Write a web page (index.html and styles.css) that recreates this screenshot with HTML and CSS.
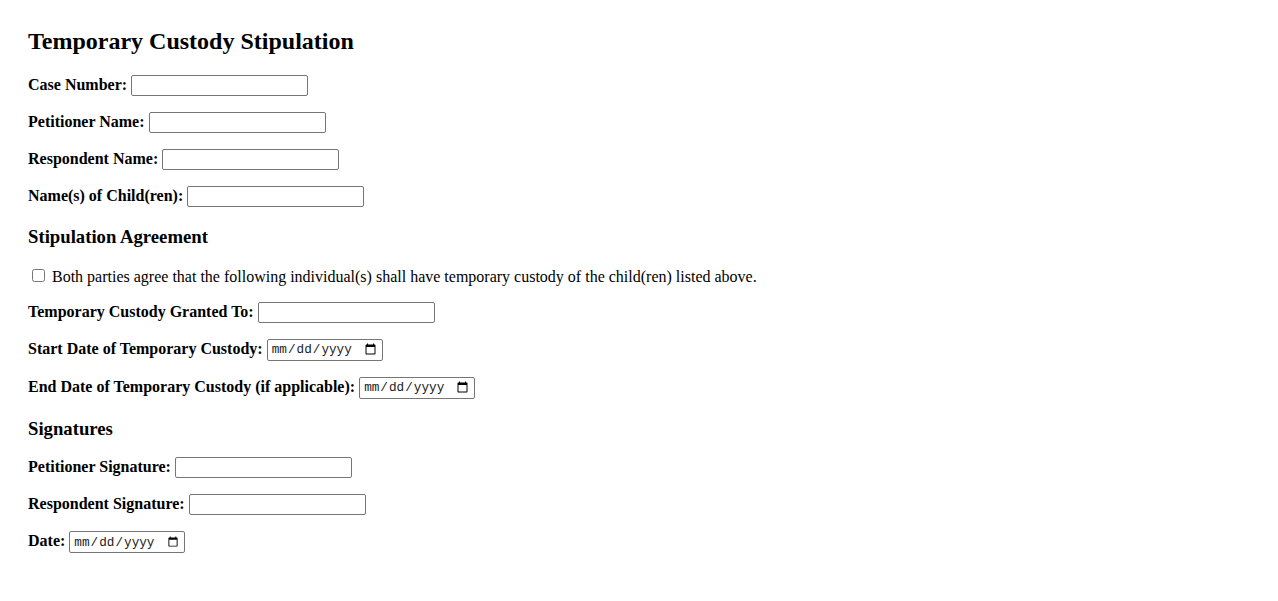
FILE: index.html
```html
<!DOCTYPE html>
<html lang="en">
<head>
<meta charset="utf-8">
<title>Temporary Custody Stipulation</title>
<link rel="stylesheet" href="styles.css">
</head>
<body>
<div class="page">
  <h2 class="title">Temporary Custody Stipulation</h2>
  <form>
    <div class="form-group">
      <label for="case">Case Number:</label>
      <input type="text" id="case" class="text-field">
    </div>
    <div class="form-group">
      <label for="petitioner">Petitioner Name:</label>
      <input type="text" id="petitioner" class="text-field">
    </div>
    <div class="form-group">
      <label for="respondent">Respondent Name:</label>
      <input type="text" id="respondent" class="text-field">
    </div>
    <div class="form-group">
      <label for="children">Name(s) of Child(ren):</label>
      <input type="text" id="children" class="text-field">
    </div>

    <h3 class="section">Stipulation Agreement</h3>
    <div class="form-group">
      <label class="check-label"><input type="checkbox" class="check"> Both parties agree that the following individual(s) shall have temporary custody of the child(ren) listed above.</label>
    </div>
    <div class="form-group">
      <label for="granted">Temporary Custody Granted To:</label>
      <input type="text" id="granted" class="text-field">
    </div>
    <div class="form-group">
      <label for="start">Start Date of Temporary Custody:</label>
      <input type="date" id="start" class="date-field">
    </div>
    <div class="form-group">
      <label for="end">End Date of Temporary Custody (if applicable):</label>
      <input type="date" id="end" class="date-field">
    </div>

    <h3 class="section">Signatures</h3>
    <div class="form-group">
      <label for="psig">Petitioner Signature:</label>
      <input type="text" id="psig" class="text-field">
    </div>
    <div class="form-group">
      <label for="rsig">Respondent Signature:</label>
      <input type="text" id="rsig" class="text-field">
    </div>
    <div class="form-group">
      <label for="date">Date:</label>
      <input type="date" id="date" class="date-field">
    </div>
  </form>
</div>
</body>
</html>
```

FILE: styles.css
```css
html, body {
  margin: 0;
  padding: 0;
  background: #ffffff;
}

body {
  font-family: "Liberation Serif", "Times New Roman", serif;
  font-size: 16px;
  color: #000000;
}

.page {
  padding: 28px 28px 20px 28px;
}

.title {
  font-size: 24px;
  font-weight: bold;
  margin: 0 0 20px 0;
}

.section {
  font-size: 18.72px;
  font-weight: bold;
  margin: 19px 0 17.5px 0;
}

.form-group {
  margin-bottom: 16px;
}

.form-group label {
  font-weight: bold;
}

.form-group .check-label {
  font-weight: normal;
}

.text-field {
  box-sizing: border-box;
  width: 177px;
  height: 21px;
  border: 1px solid #767676;
  border-radius: 2px;
  padding: 1px 2px;
  font-family: "Liberation Sans", Arial, sans-serif;
  font-size: 13.33px;
  background: #ffffff;
}

.date-field {
  box-sizing: border-box;
  width: 116px;
  height: 22px;
  border: 1px solid #767676;
  border-radius: 2px;
  padding: 1px 3px;
  font-family: "Liberation Mono", monospace;
  font-size: 12.7px;
  color: #222222;
  background: #ffffff;
}

.check {
  width: 13px;
  height: 13px;
  margin: 3px 3px 3px 4px;
}
```
